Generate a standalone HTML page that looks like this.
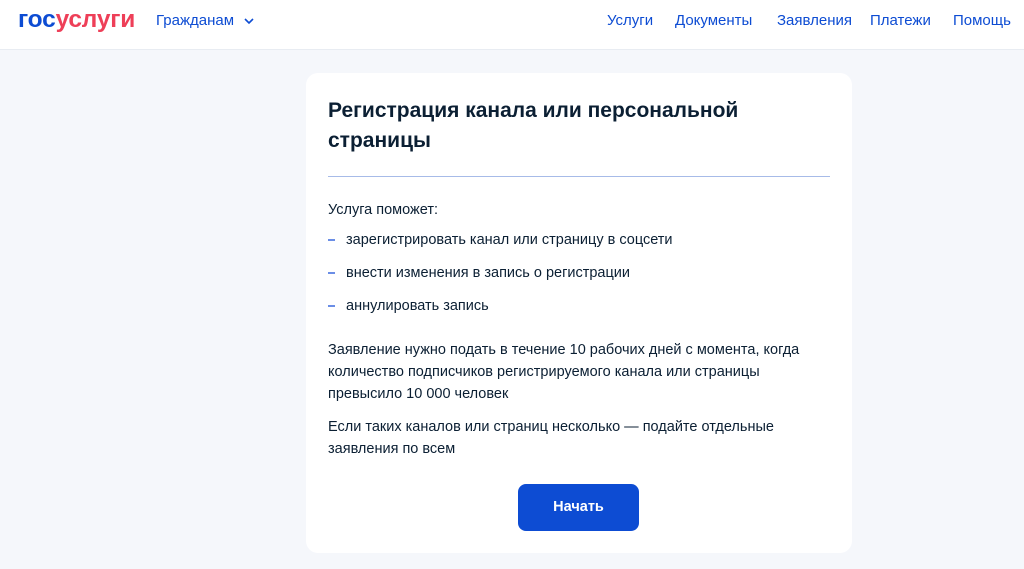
<!DOCTYPE html>
<html><head><meta charset="utf-8"><style>
*{margin:0;padding:0;box-sizing:border-box}
body{width:1024px;height:569px;overflow:hidden;background:#f5f7fb;font-family:"Liberation Sans",sans-serif;color:#0b1f33;position:relative}
.hdr{position:absolute;left:0;top:0;width:1024px;height:50px;background:#fff;border-bottom:1px solid #e8ecf2}
.logo{position:absolute;left:18px;top:6px;font-size:24.5px;font-weight:bold;letter-spacing:-0.2px}
.logo .a{color:#0d4cd3}.logo .b{color:#ee3f58}
.nav{position:absolute;top:12px;font-size:15px;color:#0d4cd3}
.card{position:absolute;left:306px;top:73px;width:546px;height:480px;background:#fff;border-radius:12px}
.t{position:absolute;left:22px;top:23px;font-size:21px;font-weight:bold;line-height:30px;width:480px}
.hr{position:absolute;left:22px;top:103px;width:502px;height:1px;background:#a7bbe8}
.p{position:absolute;left:22px;font-size:14.5px;line-height:22px;width:500px}
.d{position:absolute;left:22px;width:7px;height:2px;background:#6b8ee6}
.btn{position:absolute;left:212px;top:411px;width:121px;height:47px;background:#0d4cd3;border-radius:8px;color:#fff;font-size:14.5px;font-weight:bold;text-align:center;line-height:47px}
</style></head><body>
<div class="hdr">
<div class="logo"><span class="a">гос</span><span class="b">услуги</span></div>
<div class="nav" style="left:156px">Гражданам <svg width="10" height="8" viewBox="0 0 10 8" style="margin-left:6px"><path d="M1 2l4 4 4-4" stroke="#0d4cd3" stroke-width="1.6" fill="none"/></svg></div>
<div class="nav" style="left:607px">Услуги</div>
<div class="nav" style="left:675px">Документы</div>
<div class="nav" style="left:777px">Заявления</div>
<div class="nav" style="left:870px">Платежи</div>
<div class="nav" style="left:953px">Помощь</div>
</div>
<div class="card">
<div class="t">Регистрация канала или персональной страницы</div>
<div class="hr"></div>
<div class="p" style="top:126px">Услуга поможет:</div>
<div class="d" style="top:166px"></div><div class="p" style="left:40px;top:156px">зарегистрировать канал или страницу в соцсети</div>
<div class="d" style="top:199px"></div><div class="p" style="left:40px;top:189px">внести изменения в запись о регистрации</div>
<div class="d" style="top:232px"></div><div class="p" style="left:40px;top:222px">аннулировать запись</div>
<div class="p" style="top:266px">Заявление нужно подать в течение 10 рабочих дней с момента, когда количество подписчиков регистрируемого канала или страницы превысило 10 000 человек</div>
<div class="p" style="top:343px">Если таких каналов или страниц несколько — подайте отдельные заявления по всем</div>
<div class="btn">Начать</div>
</div>
</body></html>
